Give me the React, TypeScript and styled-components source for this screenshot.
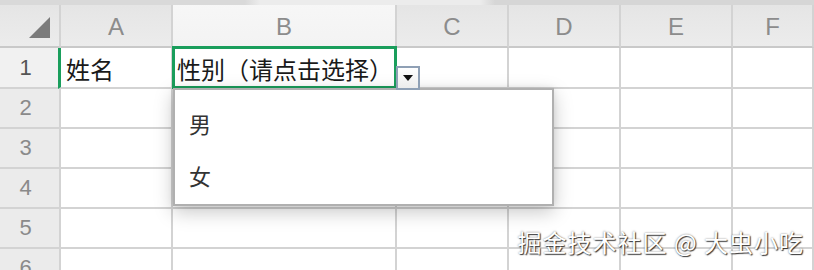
import React from "react";
import styled, { createGlobalStyle } from "styled-components";

const GlobalStyle = createGlobalStyle`
  html, body {
    margin: 0;
    padding: 0;
    background: #ffffff;
    overflow: hidden;
  }
`;

const LINE = "#d3d3d3";
const GREEN = "#1a9e5c";
const CJK = `"Noto Sans CJK SC", "Noto Sans", sans-serif`;

const Sheet = styled.div`
  position: relative;
  width: 814px;
  height: 270px;
  overflow: hidden;
  display: grid;
  grid-template-columns: 61px 112px 224px 112px 112px 112px 1fr;
  grid-template-rows: 48px 41px repeat(5, 40px);
  background: #fff;
`;

const TopBand = styled.div`
  position: absolute;
  top: 0;
  left: 0;
  right: 0;
  height: 5px;
  background: linear-gradient(
    90deg,
    #d9d9d9 0px,
    #d9d9d9 245px,
    #ececec 260px,
    #ececec 480px,
    #d6d6d6 495px,
    #d6d6d6 100%
  );
`;

const Corner = styled.div`
  box-sizing: border-box;
  background: linear-gradient(#e4e4e4, #ececec);
  border-right: 2px solid ${LINE};
  border-bottom: 2px solid #c9c9c9;
  display: flex;
  align-items: flex-end;
  justify-content: flex-end;
  padding: 0 9px 8px 0;
`;

const ColHeader = styled.div<{ $active?: boolean }>`
  box-sizing: border-box;
  background: ${(p) =>
    p.$active
      ? "linear-gradient(#f7f7f7, #f3f3f3)"
      : "linear-gradient(#e4e4e4, #ececec)"};
  border-right: 2px solid ${LINE};
  border-bottom: 2px solid #c9c9c9;
  display: flex;
  align-items: center;
  justify-content: center;
  padding-top: 8px;
  font-family: "Liberation Sans", Arial, sans-serif;
  font-size: 24px;
  color: #8c8c8c;
`;

const RowHeader = styled.div<{ $active?: boolean }>`
  box-sizing: border-box;
  background: ${(p) => (p.$active ? "#f1f1f1" : "#ebebeb")};
  border-right: 2px solid ${LINE};
  border-bottom: 2px solid ${LINE};
  display: flex;
  align-items: center;
  justify-content: center;
  padding-right: 8px;
  font-family: "Liberation Sans", Arial, sans-serif;
  font-size: 22px;
  color: ${(p) => (p.$active ? "#555" : "#8a8a8a")};
`;

const Cell = styled.div<{ $selected?: boolean; $mark?: boolean }>`
  position: relative;
  box-sizing: border-box;
  border-right: 2px solid ${LINE};
  border-bottom: 2px solid ${LINE};
  border-left: ${(p) => (p.$mark ? `3px solid ${GREEN}` : "none")};
  margin-left: ${(p) => (p.$mark ? "-3px" : "0")};
  display: flex;
  align-items: center;
  padding-left: ${(p) => (p.$mark ? "5px" : "4px")};
  padding-top: 2px;
  font-family: ${CJK};
  font-size: 24px;
  color: #1a1a1a;
  white-space: nowrap;

  &::after {
    content: "";
    display: ${(p) => (p.$selected ? "block" : "none")};
    position: absolute;
    top: -2px;
    left: -1px;
    right: -2px;
    bottom: -2px;
    border: 3px solid ${GREEN};
    pointer-events: none;
  }
`;

const DropButton = styled.div`
  position: absolute;
  left: 396px;
  top: 66px;
  width: 20px;
  height: 20px;
  border: 2px solid #8fa0b5;
  background: linear-gradient(#ffffff, #ececec);
  display: flex;
  align-items: center;
  justify-content: center;
  z-index: 3;
`;

const Dropdown = styled.div`
  position: absolute;
  left: 173px;
  top: 88px;
  width: 381px;
  height: 118px;
  box-sizing: border-box;
  background: #fff;
  border: 2px solid #b0b0b0;
  box-shadow: 0 6px 18px rgba(0, 0, 0, 0.22), 0 0 6px rgba(0, 0, 0, 0.08);
  padding-top: 7px;
  z-index: 2;
`;

const Option = styled.div`
  height: 52px;
  display: flex;
  align-items: center;
  padding-left: 14px;
  font-family: ${CJK};
  font-size: 22px;
  color: #333;
`;

const Watermark = styled.div`
  position: absolute;
  right: 10px;
  bottom: 11px;
  font-family: ${CJK};
  font-size: 24px;
  color: #ffffff;
  letter-spacing: 1px;
  text-shadow: 1px 1px 1px rgba(0, 0, 0, 0.75), 0 0 2px rgba(0, 0, 0, 0.5);
  z-index: 4;
`;

const cols = ["A", "B", "C", "D", "E", "F"];

export default function App() {
  const rows = [1, 2, 3, 4, 5, 6];
  return (
    <>
      <GlobalStyle />
      <Sheet>
        <Corner>
          <svg width="21" height="21" viewBox="0 0 21 21">
            <polygon points="21,0 21,21 0,21" fill="#7b7b7b" />
          </svg>
        </Corner>
        {cols.map((c) => (
          <ColHeader key={c} $active={c === "B"}>
            {c}
          </ColHeader>
        ))}
        {rows.map((r) => (
          <React.Fragment key={r}>
            <RowHeader $active={r === 1}>{r}</RowHeader>
            <Cell $mark={r === 1}>{r === 1 ? "姓名" : ""}</Cell>
            <Cell $selected={r === 1}>{r === 1 ? "性别（请点击选择）" : ""}</Cell>
            <Cell />
            <Cell />
            <Cell />
            <Cell />
          </React.Fragment>
        ))}
        <TopBand />
        <DropButton>
          <svg width="10" height="6" viewBox="0 0 10 6">
            <polygon points="0,0 10,0 5,6" fill="#111" />
          </svg>
        </DropButton>
        <Dropdown>
          <Option>男</Option>
          <Option>女</Option>
        </Dropdown>
        <Watermark>掘金技术社区 @ 大虫小吃</Watermark>
      </Sheet>
    </>
  );
}
